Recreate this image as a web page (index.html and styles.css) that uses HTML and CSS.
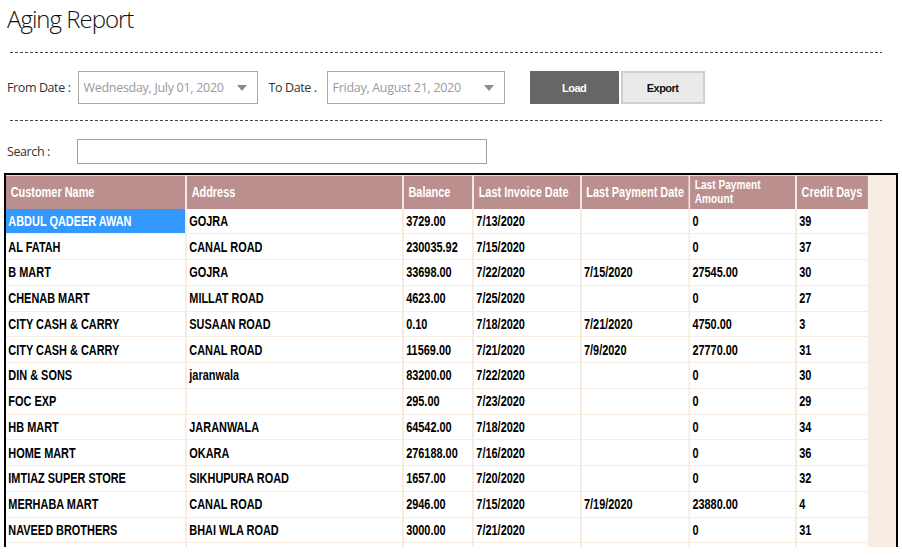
FILE: index.html
```html
<!DOCTYPE html>
<html>
<head>
<meta charset="utf-8">
<link rel="stylesheet" href="styles.css">
</head>
<body>
<div class="page">
  <h1 class="title">Aging Report</h1>
  <div class="dash"></div>
  <div class="filters">
    <span class="label">From Date :</span>
    <div class="picker picker-from"><span class="pick-text">Wednesday, July 01, 2020</span><span class="caret"></span></div>
    <span class="label label-to">To Date .</span>
    <div class="picker picker-to"><span class="pick-text">Friday, August 21, 2020</span><span class="caret"></span></div>
    <button class="btn btn-load">Load</button>
    <button class="btn btn-export">Export</button>
  </div>
  <div class="dash"></div>
  <div class="search-row">
    <span class="label">Search :</span>
    <div class="search-box"></div>
  </div>
  <div class="grid">
    <table class="tbl">
      <colgroup>
        <col class="c1"><col class="c2"><col class="c3"><col class="c4"><col class="c5"><col class="c6"><col class="c7">
      </colgroup>
      <thead>
        <tr>
          <th>Customer Name</th><th>Address</th><th>Balance</th><th>Last Invoice Date</th><th>Last Payment Date</th><th class="two"><div class="l1">Last Payment</div><div class="l2">Amount</div></th><th>Credit Days</th>
        </tr>
      </thead>
      <tbody>
        <tr><td class="sel">ABDUL QADEER AWAN</td><td>GOJRA</td><td>3729.00</td><td>7/13/2020</td><td></td><td>0</td><td>39</td></tr>
        <tr><td>AL FATAH</td><td>CANAL ROAD</td><td>230035.92</td><td>7/15/2020</td><td></td><td>0</td><td>37</td></tr>
        <tr><td>B MART</td><td>GOJRA</td><td>33698.00</td><td>7/22/2020</td><td>7/15/2020</td><td>27545.00</td><td>30</td></tr>
        <tr><td>CHENAB MART</td><td>MILLAT ROAD</td><td>4623.00</td><td>7/25/2020</td><td></td><td>0</td><td>27</td></tr>
        <tr><td>CITY CASH &amp; CARRY</td><td>SUSAAN ROAD</td><td>0.10</td><td>7/18/2020</td><td>7/21/2020</td><td>4750.00</td><td>3</td></tr>
        <tr><td>CITY CASH &amp; CARRY</td><td>CANAL ROAD</td><td>11569.00</td><td>7/21/2020</td><td>7/9/2020</td><td>27770.00</td><td>31</td></tr>
        <tr><td>DIN &amp; SONS</td><td>jaranwala</td><td>83200.00</td><td>7/22/2020</td><td></td><td>0</td><td>30</td></tr>
        <tr><td>FOC EXP</td><td></td><td>295.00</td><td>7/23/2020</td><td></td><td>0</td><td>29</td></tr>
        <tr><td>HB MART</td><td>JARANWALA</td><td>64542.00</td><td>7/18/2020</td><td></td><td>0</td><td>34</td></tr>
        <tr><td>HOME MART</td><td>OKARA</td><td>276188.00</td><td>7/16/2020</td><td></td><td>0</td><td>36</td></tr>
        <tr><td>IMTIAZ SUPER STORE</td><td>SIKHUPURA ROAD</td><td>1657.00</td><td>7/20/2020</td><td></td><td>0</td><td>32</td></tr>
        <tr><td>MERHABA MART</td><td>CANAL ROAD</td><td>2946.00</td><td>7/15/2020</td><td>7/19/2020</td><td>23880.00</td><td>4</td></tr>
        <tr><td>NAVEED BROTHERS</td><td>BHAI WLA ROAD</td><td>3000.00</td><td>7/21/2020</td><td></td><td>0</td><td>31</td></tr>
        <tr><td></td><td></td><td></td><td></td><td></td><td></td><td></td></tr>
      </tbody>
    </table>
  </div>
</div>
</body>
</html>
```
FILE: styles.css
```css
html, body {
  margin: 0;
  padding: 0;
  background: #ffffff;
  overflow: hidden;
}
.page {
  width: 902px;
  height: 555px;
  font-family: "Open Sans", "Liberation Sans", sans-serif;
  color: #222;
}
.title {
  margin: 0;
  padding: 4px 0 0 7px;
  height: 36px;
  box-sizing: border-box;
  font-family: "Open Sans", sans-serif;
  font-weight: 300;
  font-size: 24px;
  line-height: 30px;
  color: #111;
  letter-spacing: -1px;
}
.dash {
  margin: 16px 20px 0 10px;
  height: 1px;
  background: repeating-linear-gradient(90deg, #444 0 3px, transparent 3px 5px);
}
.filters {
  display: flex;
  align-items: center;
  margin-top: 18px;
  height: 33px;
  padding-left: 7px;
}
.label {
  font-family: "Open Sans", sans-serif;
  font-size: 12.5px;
  color: #333;
  letter-spacing: -0.4px;
}
.picker {
  display: flex;
  align-items: center;
  justify-content: space-between;
  box-sizing: border-box;
  height: 33px;
  border: 1px solid #a9a9a9;
  padding: 0 10px 0 5px;
  margin-left: 7px;
}
.picker-from { width: 180px; }
.picker-to { width: 178px; margin-left: 10px; }
.label-to { margin-left: 11px; }
.pick-text {
  font-family: "Open Sans", sans-serif;
  font-size: 12.5px;
  color: #9a9a9a;
  letter-spacing: -0.3px;
}
.caret {
  width: 0;
  height: 0;
  border-left: 5px solid transparent;
  border-right: 5px solid transparent;
  border-top: 6px solid #8c8c8c;
}
.btn {
  box-sizing: border-box;
  height: 33px;
  font-family: "Liberation Sans", sans-serif;
  font-weight: bold;
  font-size: 11px;
  letter-spacing: -0.5px;
  border: none;
  padding: 0;
}
.btn-load {
  margin-left: 25px;
  width: 89px;
  background: #666666;
  color: #ffffff;
}
.btn-export {
  margin-left: 2px;
  width: 84px;
  background: #eaeaea;
  border: 2px solid #cfcfcf;
  color: #111;
}
.search-row {
  display: flex;
  align-items: center;
  margin-top: 18px;
  height: 25px;
  padding-left: 7px;
}
.search-box {
  box-sizing: border-box;
  margin-left: 27px;
  width: 410px;
  height: 25px;
  border: 1px solid #a0a0a0;
}
.grid {
  margin: 9px 0 0 4px;
  width: 894px;
  height: 374px;
  box-sizing: border-box;
  border: 2px solid #000;
  border-bottom: none;
  background: #f8ede3;
  overflow: hidden;
}
/* the grid font is a narrow face; draw it with a horizontal squeeze */
.tbl {
  border-collapse: collapse;
  table-layout: fixed;
  width: 1105px;
  transform: scaleX(0.78);
  transform-origin: 0 0;
  font-family: "Liberation Sans", sans-serif;
  font-weight: bold;
  font-size: 14px;
}
.c1 { width: 231px; }
.c2 { width: 278px; }
.c3 { width: 90px; }
.c4 { width: 138px; }
.c5 { width: 139px; }
.c6 { width: 137px; }
.c7 { width: 92px; }
.tbl th {
  height: 33px;
  box-sizing: border-box;
  padding: 0 0 0 6px;
  background: #bc8f8f;
  color: #ffffff;
  text-align: left;
  font-weight: bold;
  border-top: 1px solid #e6d3d3;
  border-left: 2px solid #f2e6e6;
  line-height: 16px;
  white-space: nowrap;
  overflow: hidden;
}
.tbl th.two {
  font-size: 13px;
  line-height: 14px;
  padding-bottom: 1px;
}
.tbl th:first-child { border-left: none; }
.tbl td {
  height: 24.75px;
  padding: 0 0 0 3px;
  background: #ffffff;
  color: #000;
  border-bottom: 1px solid #f8ebdf;
  border-left: 2px solid #f8ebdf;
  white-space: nowrap;
  overflow: hidden;
}
.tbl td:first-child { border-left: none; }
.tbl td.sel {
  background: #3399ff;
  color: #ffffff;
}
```
